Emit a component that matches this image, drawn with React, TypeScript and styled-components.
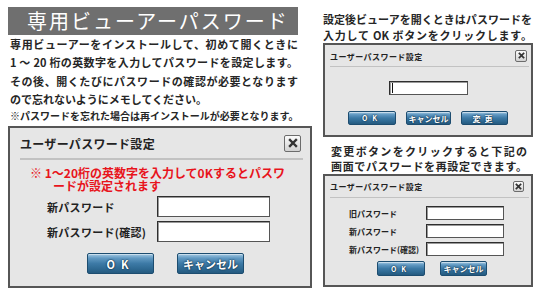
import React from 'react';
import styled, { createGlobalStyle } from 'styled-components';

const GlobalStyle = createGlobalStyle`
  html, body { margin: 0; padding: 0; background: #fff; }
  body { font-family: "Noto Sans CJK JP", "Noto Sans", sans-serif; color: #222; }
  * { box-sizing: border-box; }
`;

const Page = styled.div`
  display: flex;
  align-items: flex-start;
  gap: 11px;
  padding-left: 8px;
  width: 544px;
  height: 293px;
  overflow: hidden;
`;

const LeftCol = styled.div`
  width: 304px;
  display: flex;
  flex-direction: column;
`;

const RightCol = styled.div`
  width: 210px;
  display: flex;
  flex-direction: column;
`;

const TitleBar = styled.h1`
  margin: 7px 0 0;
  width: 290px;
  height: 28px;
  padding-left: 19px;
  background: #6f6f6f;
  color: #fff;
  font-size: 20px;
  font-weight: 400;
  line-height: 28px;
  letter-spacing: 2px;
  white-space: nowrap;
`;

const TextBlock = styled.div<{ $size: number; $lh: number; $w: number; $ml?: number; $mt?: number }>`
  margin: ${(p) => p.$mt ?? 0}px 0 0 ${(p) => p.$ml ?? 0}px;
  width: ${(p) => p.$w}px;
  font-size: ${(p) => p.$size}px;
  line-height: ${(p) => p.$lh}px;
  font-weight: 700;
  color: #262626;
`;

const Line = styled.span<{ $fill?: boolean }>`
  display: block;
  white-space: nowrap;
  text-align: ${(p) => (p.$fill ? 'justify' : 'left')};
  text-align-last: ${(p) => (p.$fill ? 'justify' : 'left')};
`;

const Dialog = styled.section<{ $mt?: number }>`
  margin-top: ${(p) => p.$mt ?? 0}px;
  display: flex;
  flex-direction: column;
  border: 2px solid #565656;
  background: #e6e6e6;
`;

const DialogHeader = styled.div<{ $h: number; $pl: number; $pr: number }>`
  display: flex;
  align-items: center;
  justify-content: space-between;
  height: ${(p) => p.$h}px;
  padding: 0 ${(p) => p.$pr}px 0 ${(p) => p.$pl}px;
`;

const DialogTitle = styled.span<{ $size: number; $ls: number; $dy?: number }>`
  font-size: ${(p) => p.$size}px;
  letter-spacing: ${(p) => p.$ls}px;
  font-weight: 700;
  color: #222;
  white-space: nowrap;
  position: relative;
  top: ${(p) => p.$dy ?? 0}px;
`;

const CloseBox = styled.span<{ $s: number }>`
  width: ${(p) => p.$s}px;
  height: ${(p) => p.$s}px;
  display: flex;
  align-items: center;
  justify-content: center;
  border: 1px solid #6c6c6c;
  border-radius: 2px;
  background: linear-gradient(#fbfbfb, #d2d2d2);
`;

const Divider = styled.div<{ $ml: number; $mr: number; $h: number }>`
  margin: 0 ${(p) => p.$mr}px 0 ${(p) => p.$ml}px;
  height: ${(p) => p.$h}px;
  background: #c2c2c2;
`;

const RedNote = styled.div`
  margin: 6px 0 0 20px;
  color: #e8141c;
  font-size: 12px;
  line-height: 13px;
  font-weight: 700;
  white-space: nowrap;
`;

const RedIndent = styled.span`
  display: block;
  padding-left: 23px;
`;

const FieldGrid = styled.div<{ $labelW: number; $gap: number; $pl: number; $mt: number }>`
  display: grid;
  grid-template-columns: ${(p) => p.$labelW}px max-content;
  row-gap: ${(p) => p.$gap}px;
  align-items: center;
  padding-left: ${(p) => p.$pl}px;
  margin-top: ${(p) => p.$mt}px;
`;

const Label = styled.span<{ $size: number; $ls: number }>`
  font-size: ${(p) => p.$size}px;
  letter-spacing: ${(p) => p.$ls}px;
  font-weight: 700;
  color: #222;
  white-space: nowrap;
`;

const Input = styled.span<{ $w: number; $h: number; $caret?: boolean }>`
  position: relative;
  display: block;
  width: ${(p) => p.$w}px;
  height: ${(p) => p.$h}px;
  background: #fff;
  border: 1px solid #555;
  border-top-color: #2e2e2e;
  border-left-color: #2e2e2e;
  box-shadow: inset 1px 1px 0 #9a9a9a;
  &::before {
    content: '';
    display: ${(p) => (p.$caret ? 'block' : 'none')};
    position: absolute;
    left: 2px;
    top: 1px;
    bottom: 1px;
    width: 1px;
    background: #111;
  }
`;

const CenterRow = styled.div<{ $mt: number }>`
  display: flex;
  justify-content: center;
  margin-top: ${(p) => p.$mt}px;
`;

const ButtonRow = styled.div<{ $gap: number; $pl?: number; $mt: number; $pb: number; $center?: boolean }>`
  display: flex;
  gap: ${(p) => p.$gap}px;
  justify-content: ${(p) => (p.$center ? 'center' : 'flex-start')};
  padding: 0 0 ${(p) => p.$pb}px ${(p) => p.$pl ?? 0}px;
  margin-top: ${(p) => p.$mt}px;
`;

const Button = styled.span<{ $w: number; $h: number; $size: number; $ls?: number }>`
  display: flex;
  align-items: center;
  justify-content: center;
  width: ${(p) => p.$w}px;
  height: ${(p) => p.$h}px;
  border: 1px solid #1d4d70;
  border-radius: 2px;
  background: linear-gradient(
    to bottom,
    #a4c9e3 0%,
    #6199c2 22%,
    #3d7aa6 50%,
    #2e6992 78%,
    #255a7f 100%
  );
  box-shadow: inset 0 1px 0 rgba(255, 255, 255, 0.45);
  color: #fff;
  font-size: ${(p) => p.$size}px;
  font-weight: 700;
  letter-spacing: ${(p) => p.$ls ?? 0}px;
  white-space: nowrap;
  text-shadow: 0 0 1px #0c2a40, 0 0 2px #0c2a40;
`;

const CloseIcon = ({ s }: { s: number }) => (
  <svg width={s} height={s} viewBox="0 0 10 10">
    <path d="M2 2 L8 8 M8 2 L2 8" stroke="#333" strokeWidth={2.4} strokeLinecap="square" />
  </svg>
);

export default function App() {
  return (
    <>
      <GlobalStyle />
      <Page>
        <LeftCol>
          <TitleBar>専用ビューアーパスワード</TitleBar>
          <TextBlock $size={11} $lh={18} $w={288} $ml={2}>
            <Line $fill>専用ビューアーをインストールして、初めて開くときに</Line>
            <Line $fill>1 〜 20 桁の英数字を入力してパスワードを設定します。</Line>
          </TextBlock>
          <TextBlock $size={11} $lh={18} $w={288} $ml={2} $mt={1}>
            <Line $fill>その後、開くたびにパスワードの確認が必要となります</Line>
            <Line>ので忘れないようにメモしてください。</Line>
          </TextBlock>
          <TextBlock $size={10} $lh={16} $w={288} $ml={2}>
            <Line $fill>※パスワードを忘れた場合は再インストールが必要となります。</Line>
          </TextBlock>

          <Dialog $mt={2}>
            <DialogHeader $h={30} $pl={10} $pr={9}>
              <DialogTitle $size={12} $ls={0.3}>ユーザーパスワード設定</DialogTitle>
              <CloseBox $s={17}>
                <CloseIcon s={10} />
              </CloseBox>
            </DialogHeader>
            <Divider $ml={10} $mr={7} $h={2} />
            <RedNote>
              ※ 1〜20桁の英数字を入力して0Kするとパスワ
              <RedIndent>ードが設定されます</RedIndent>
            </RedNote>
            <FieldGrid $labelW={110} $gap={4} $pl={37} $mt={4}>
              <Label $size={11} $ls={0.3}>新パスワード</Label>
              <Input $w={113} $h={21} />
              <Label $size={11} $ls={0.3}>新パスワード(確認)</Label>
              <Input $w={113} $h={21} />
            </FieldGrid>
            <ButtonRow $gap={23} $pl={77} $mt={11} $pb={12}>
              <Button $w={67} $h={21} $size={11} $ls={6}>OK</Button>
              <Button $w={67} $h={21} $size={11}>キャンセル</Button>
            </ButtonRow>
          </Dialog>
        </LeftCol>

        <RightCol>
          <TextBlock $size={11} $lh={16} $w={209} $mt={11}>
            <Line $fill>設定後ビューアを開くときはパスワードを</Line>
            <Line $fill>入力して OK ボタンをクリックします。</Line>
          </TextBlock>
          <Dialog>
            <DialogHeader $h={21} $pl={5} $pr={4}>
              <DialogTitle $size={8} $ls={0.45} $dy={1}>ユーザーパスワード設定</DialogTitle>
              <CloseBox $s={12}>
                <CloseIcon s={7} />
              </CloseBox>
            </DialogHeader>
            <Divider $ml={5} $mr={2} $h={1} />
            <CenterRow $mt={14}>
              <Input $w={79} $h={14} $caret />
            </CenterRow>
            <ButtonRow $gap={10} $mt={16} $pb={10} $center>
              <Button $w={48} $h={14} $size={7} $ls={5}>OK</Button>
              <Button $w={45} $h={14} $size={8}>キャンセル</Button>
              <Button $w={47} $h={14} $size={8} $ls={4}>変更</Button>
            </ButtonRow>
          </Dialog>

          <TextBlock $size={11} $lh={15} $w={196} $ml={8} $mt={7}>
            <Line $fill>変更ボタンをクリックすると下記の</Line>
            <Line $fill>画面でパスワードを再設定できます。</Line>
          </TextBlock>
          <Dialog>
            <DialogHeader $h={21} $pl={5} $pr={7}>
              <DialogTitle $size={8} $ls={0.45}>ユーザーパスワード設定</DialogTitle>
              <CloseBox $s={11}>
                <CloseIcon s={7} />
              </CloseBox>
            </DialogHeader>
            <Divider $ml={5} $mr={2} $h={1} />
            <FieldGrid $labelW={77} $gap={4} $pl={24} $mt={8}>
              <Label $size={8} $ls={0}>旧パスワード</Label>
              <Input $w={78} $h={14} />
              <Label $size={8} $ls={0}>新パスワード</Label>
              <Input $w={78} $h={14} />
              <Label $size={8} $ls={0}>新パスワード(確認)</Label>
              <Input $w={78} $h={14} />
            </FieldGrid>
            <ButtonRow $gap={15} $pl={52} $mt={5} $pb={9}>
              <Button $w={48} $h={15} $size={7} $ls={5}>OK</Button>
              <Button $w={47} $h={15} $size={8}>キャンセル</Button>
            </ButtonRow>
          </Dialog>
        </RightCol>
      </Page>
    </>
  );
}
